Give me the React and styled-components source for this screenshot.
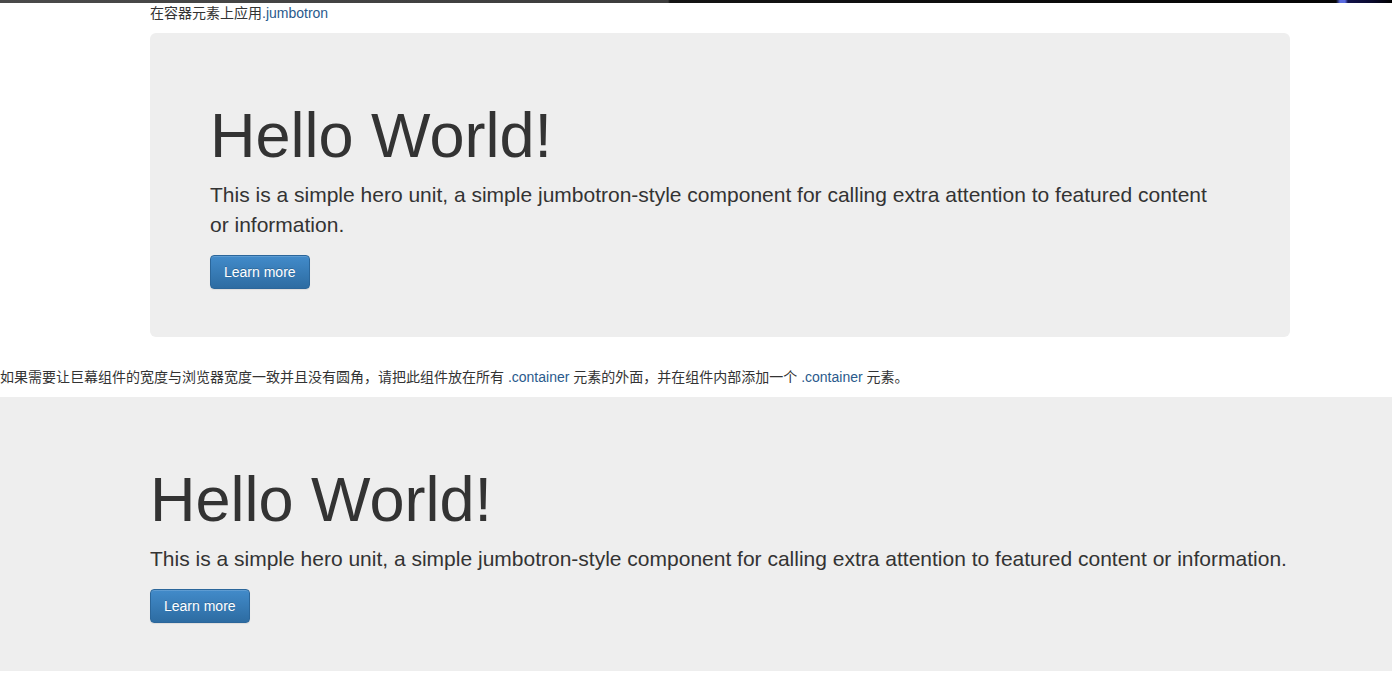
import React from 'react'
import styled, { createGlobalStyle } from 'styled-components'

const GlobalStyle = createGlobalStyle`
  html, body {
    margin: 0;
    padding: 0;
    background: #fff;
  }
  body {
    font-family: "Liberation Sans", Arial, "Noto Sans CJK SC", sans-serif;
    font-size: 14px;
    line-height: 20px;
    color: #333;
  }
`

const TopStrip = styled.div`
  height: 3px;
  background: linear-gradient(
    90deg,
    #4a4a4a 0px,
    #3c3c3c 668px,
    #141414 670px,
    #050505 1336px,
    #5a6be0 1340px,
    #5a6be0 1345px,
    #12124a 1348px,
    #0a0a30 1370px,
    #000 1392px
  );
`

const Container = styled.div`
  width: 1140px;
  margin-left: ${({ left }) => left || 150}px;
`

const Note = styled.p`
  margin: 0 0 10px;
  font-family: "Liberation Sans", Arial, "Noto Sans CJK SC", sans-serif;
  font-size: 14px;
  line-height: 20px;
  color: #333;
`

const Code = styled.span`
  color: #2a5a8c;
`

const Jumbotron = styled.div`
  background: #eee;
  border-radius: ${({ full }) => (full ? 0 : 6)}px;
  padding: 48px ${({ full }) => (full ? 0 : 60)}px;
  margin-bottom: 30px;
`

const Title = styled.h1`
  margin: 20px 0 10px;
  font-family: "Liberation Sans", Arial, sans-serif;
  font-size: 63px;
  line-height: 69px;
  font-weight: 400;
  color: #333;
`

const Lead = styled.p`
  margin: 0 0 15px;
  font-family: "Liberation Sans", Arial, sans-serif;
  font-size: 21px;
  line-height: 30px;
  font-weight: 400;
  color: #333;
`

const Button = styled.a`
  display: inline-block;
  box-sizing: border-box;
  height: 34px;
  padding: 6px 13px;
  font-family: "Liberation Sans", Arial, sans-serif;
  font-size: 14px;
  line-height: 20px;
  color: #fff;
  text-decoration: none;
  text-shadow: 0 -1px 0 rgba(0, 0, 0, 0.2);
  background-image: linear-gradient(to bottom, #428bca 0%, #2d6ca2 100%);
  border: 1px solid #2b669a;
  border-radius: 4px;
  box-shadow: inset 0 1px 0 rgba(255, 255, 255, 0.15), 0 1px 1px rgba(0, 0, 0, 0.075);
  cursor: pointer;
`

const Actions = styled.div`
  display: flex;
`

const Hero = () => (
  <>
    <Title>Hello World!</Title>
    <Lead>
      This is a simple hero unit, a simple jumbotron-style component for calling extra attention to
      featured content or information.
    </Lead>
    <Actions>
      <Button>Learn more</Button>
    </Actions>
  </>
)

const App = () => {
  return (
    <>
      <GlobalStyle />
      <TopStrip />
      <Container>
        <Note>
          在容器元素上应用<Code>.jumbotron</Code>
        </Note>
        <Jumbotron>
          <Hero />
        </Jumbotron>
      </Container>
      <Note>
        如果需要让巨幕组件的宽度与浏览器宽度一致并且没有圆角，请把此组件放在所有 <Code>.container</Code> 元素的外面，并在组件内部添加一个 <Code>.container</Code> 元素。
      </Note>
      <Jumbotron full>
        <Container>
          <Hero />
        </Container>
      </Jumbotron>
    </>
  )
}

export default App
